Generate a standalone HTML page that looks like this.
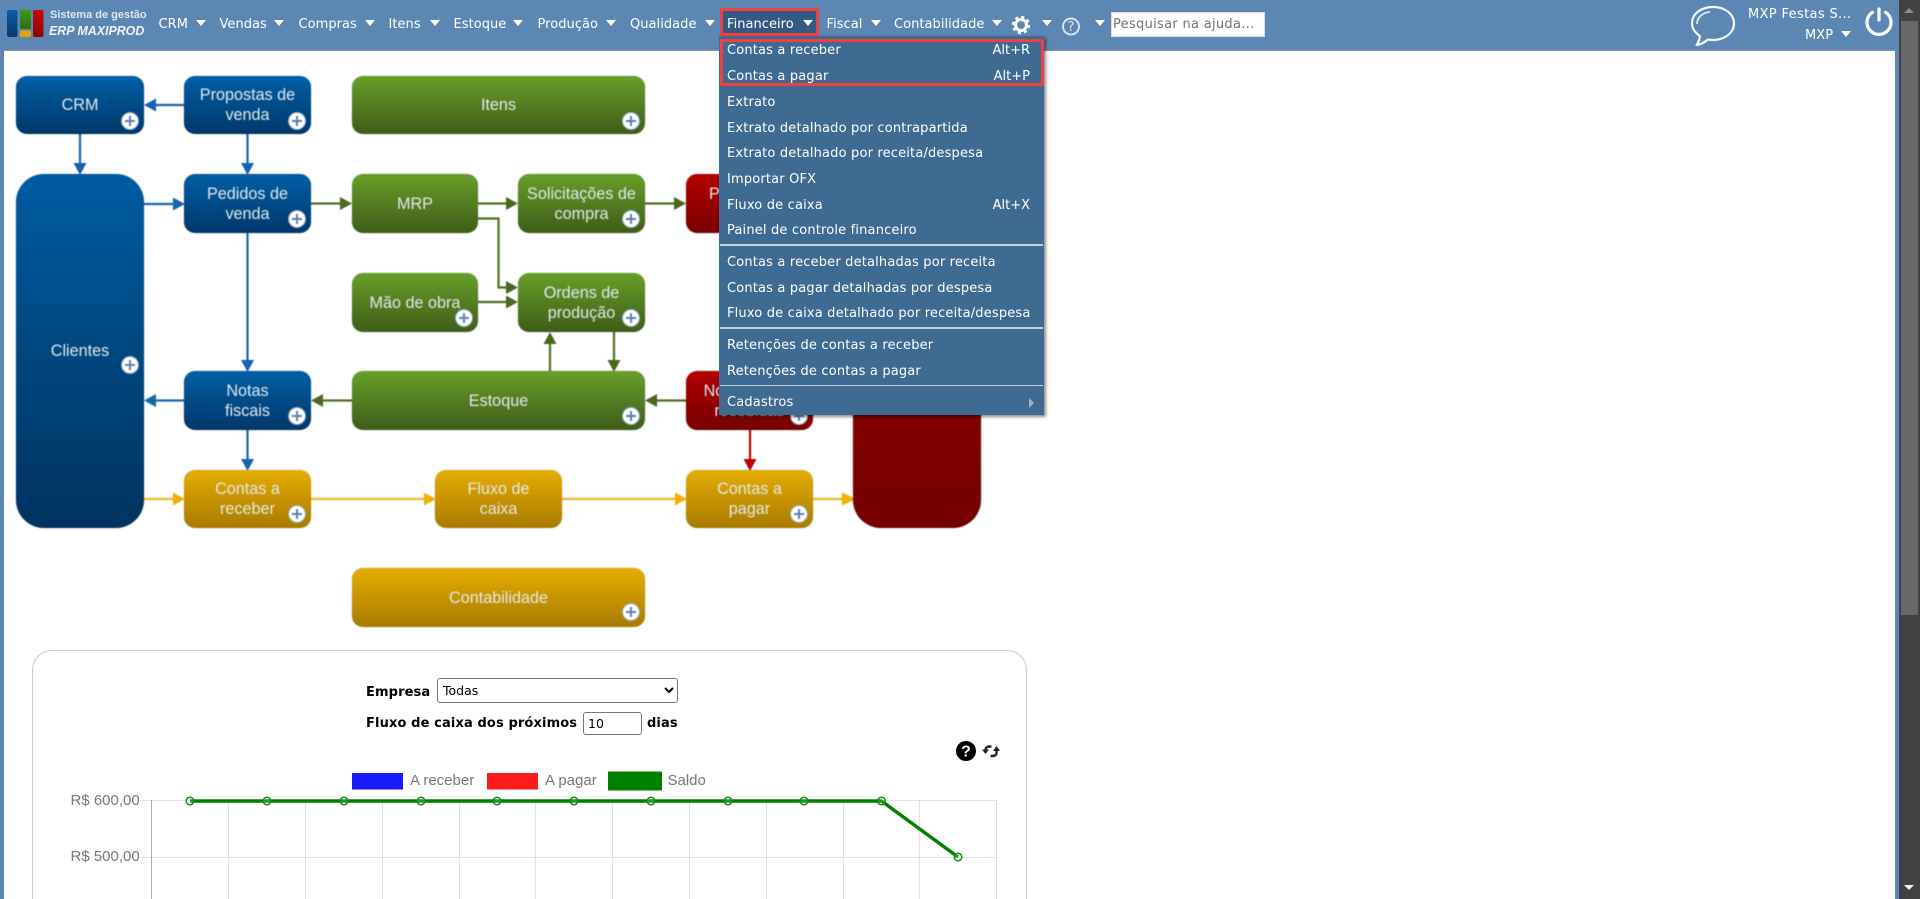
<!DOCTYPE html>
<html lang="pt-BR">
<head>
<meta charset="utf-8">
<title>ERP MAXIPROD</title>
<style>
html,body{margin:0;padding:0;width:1920px;height:899px;overflow:hidden;background:#5c87b2;}
body{position:relative;font-family:"DejaVu Sans","Liberation Sans",sans-serif;font-size:13px;color:#fff;}
.abs,.n,.c,.mi,.k,.sep{position:absolute;}
#main{position:absolute;left:4px;top:50px;width:1891px;height:849px;background:#fff;border-top:1px solid #8a9aa8;box-sizing:border-box;}
#sb{position:absolute;left:1899px;top:0;width:21px;height:899px;background:#424242;}
#thumb{position:absolute;left:2px;top:21px;width:17px;height:594px;background:#686868;}
.n{top:15px;line-height:20px;white-space:nowrap;color:#fff;letter-spacing:.04px;}
.c{width:0;height:0;border-left:5.5px solid transparent;border-right:5.5px solid transparent;border-top:6px solid #fff;top:19.5px;}
#active{position:absolute;left:720px;top:8px;width:99px;height:28px;background:#325a82;box-sizing:border-box;border:3px solid #f0403f;}
#menu{position:absolute;left:719px;top:36px;width:325px;height:379px;background:#3f6a92;box-shadow:2px 2px 3px rgba(0,0,0,.45);}
.mi{left:8px;line-height:20px;white-space:nowrap;color:#fff;letter-spacing:.17px;}
.k{right:14px;line-height:20px;color:#fff;}
.sep{left:1px;width:323px;background:#c6d0da;}
#rb{position:absolute;left:720px;top:39px;width:324px;height:47px;box-sizing:border-box;border:3px solid #f0403f;}
#diagram{position:absolute;left:0;top:0;width:1100px;height:640px;filter:blur(.45px);}
.b{position:absolute;display:flex;align-items:center;justify-content:center;text-align:center;font-family:"Liberation Sans",Arial,sans-serif;font-size:16.2px;line-height:20px;color:#e2e8ed;box-sizing:border-box;border-radius:11px;box-shadow:0 0 1px rgba(90,90,90,.5);}
.bl{background:linear-gradient(#005fa6,#00386a);}
.gr{background:linear-gradient(#689f29,#3e5c18);}
.rd{background:linear-gradient(#b40000,#760000);}
.go{background:linear-gradient(#e6ad00,#a87b00);}
.p{position:absolute;width:16px;height:16px;border-radius:50%;background:#fff;border:1.5px solid #8fa6c4;}
.p:before{content:"";position:absolute;left:3px;top:7px;width:10px;height:2px;background:#5a80b4;}
.p:after{content:"";position:absolute;left:7px;top:3px;width:2px;height:10px;background:#5a80b4;}
#panel{position:absolute;left:32px;top:650px;width:995px;height:249px;box-sizing:border-box;border:1px solid #ccc;border-bottom:none;border-radius:20px 20px 0 0;background:#fff;}
.f{position:absolute;color:#000;white-space:nowrap;line-height:20px;letter-spacing:.12px;}
.lg{position:absolute;font-family:"Liberation Sans",Arial,sans-serif;font-size:15px;color:#777;line-height:18px;white-space:nowrap;}
</style>
</head>
<body>
<div id="main"></div>

<!-- Diagram -->
<div id="diagram">
<svg class="abs" style="left:0;top:0" width="1100" height="640" viewBox="0 0 1100 640">
<g fill="none" stroke-width="2.2">
<g stroke="#1464ae">
<path d="M184 105H155M80 134V164M247.5 134V164M144 204H174M247.5 233V361M184 400.5H155M247.5 430V460"/>
</g>
<g stroke="#4f6e23">
<path d="M311 203.5H342M478 203.5H508M645 203.5H676M478 218.5H498.5V287.5H508M478 302H508M550 371V343M614 332V361M352 400.5H322M686 400.5H656"/>
</g>
<path stroke="#c00000" d="M750 430V460"/>
<path stroke="#efb32a" d="M144 499H174M311 499H425M562 499H676M813 499H845"/>
</g>
<g fill="#1464ae">
<path d="M144 105L156 98.5V111.5Z"/><path d="M80 175L73.5 163H86.5Z"/><path d="M247.5 175L241 163H254Z"/><path d="M185 204L173 197.5V210.5Z"/><path d="M247.5 372L241 360H254Z"/><path d="M144 400.5L156 394V407Z"/><path d="M247.5 471L241 459H254Z"/>
</g>
<g fill="#4a681f">
<path d="M352 203.5L340 197V210Z"/><path d="M518 203.5L506 197V210Z"/><path d="M686 203.5L674 197V210Z"/><path d="M518 287.5L506 281V294Z"/><path d="M518 302L506 295.5V308.5Z"/><path d="M550 332L543.5 344H556.5Z"/><path d="M614 372L607.5 360H620.5Z"/><path d="M311 400.5L323 394V407Z"/><path d="M645 400.5L657 394V407Z"/>
</g>
<path fill="#c00000" d="M750 471L743.5 459H756.5Z"/>
<g fill="#efb000">
<path d="M185 499L173 492.5V505.5Z"/><path d="M436 499L424 492.5V505.5Z"/><path d="M687 499L675 492.5V505.5Z"/><path d="M856 499L842 492.5V505.5Z"/>
</g>
</svg>

<div class="b bl" style="left:16px;top:76px;width:128px;height:58px">CRM</div><i class="p" style="left:121px;top:112px"></i>
<div class="b bl" style="left:184px;top:76px;width:127px;height:58px">Propostas de<br>venda</div><i class="p" style="left:288px;top:112px"></i>
<div class="b gr" style="left:352px;top:76px;width:293px;height:58px">Itens</div><i class="p" style="left:622px;top:112px"></i>
<div class="b bl" style="left:16px;top:174px;width:128px;height:354px;border-radius:28px;background:linear-gradient(#005ca1,#00335f)"><span style="position:relative;top:0;left:0">Clientes</span></div><i class="p" style="left:121px;top:356px"></i>
<div class="b bl" style="left:184px;top:174px;width:127px;height:59px">Pedidos de<br>venda</div><i class="p" style="left:288px;top:210px"></i>
<div class="b gr" style="left:352px;top:174px;width:126px;height:59px">MRP</div>
<div class="b gr" style="left:518px;top:174px;width:127px;height:59px">Solicitações de<br>compra</div><i class="p" style="left:622px;top:210px"></i>
<div class="b rd" style="left:686px;top:174px;width:127px;height:59px">Pedidos de<br>compra</div>
<div class="b gr" style="left:352px;top:273px;width:126px;height:59px">Mão de obra</div><i class="p" style="left:455px;top:309px"></i>
<div class="b gr" style="left:518px;top:273px;width:127px;height:59px">Ordens de<br>produção</div><i class="p" style="left:622px;top:309px"></i>
<div class="b gr" style="left:352px;top:371px;width:293px;height:59px">Estoque</div><i class="p" style="left:622px;top:407px"></i>
<div class="b bl" style="left:184px;top:371px;width:127px;height:59px">Notas<br>fiscais</div><i class="p" style="left:288px;top:407px"></i>
<div class="b rd" style="left:686px;top:371px;width:127px;height:59px">Notas fiscais<br>recebidas</div><i class="p" style="left:790px;top:407px"></i>
<div class="b rd" style="left:853px;top:174px;width:128px;height:354px;border-radius:28px;background:linear-gradient(#a00000,#760000)">Fornecedores</div>
<div class="b go" style="left:184px;top:470px;width:127px;height:58px">Contas a<br>receber</div><i class="p" style="left:288px;top:505px"></i>
<div class="b go" style="left:435px;top:470px;width:127px;height:58px">Fluxo de<br>caixa</div>
<div class="b go" style="left:686px;top:470px;width:127px;height:58px">Contas a<br>pagar</div><i class="p" style="left:790px;top:505px"></i>
<div class="b go" style="left:352px;top:568px;width:293px;height:59px">Contabilidade</div><i class="p" style="left:622px;top:603px"></i>
</div>

<!-- Panel -->
<div id="panel"></div>
<span class="f" style="left:366px;top:683px;font-weight:bold">Empresa</span>
<select style="position:absolute;left:437px;top:678px;width:241px;height:25px;font:12.5px 'DejaVu Sans',sans-serif;color:#000;background:#fff;border:1px solid #767676;border-radius:3px;padding-left:1px"><option>Todas</option></select>
<span class="f" style="left:366px;top:714px;font-weight:bold">Fluxo de caixa dos próximos</span>
<input value="10" style="position:absolute;left:583px;top:712px;width:59px;height:23px;box-sizing:border-box;font:12.5px 'DejaVu Sans',sans-serif;color:#000;border:1px solid #767676;border-radius:3px;padding:0 4px;background:#fff">
<span class="f" style="left:647px;top:714px;font-weight:bold">dias</span>
<svg class="abs" style="left:955px;top:740px" width="50" height="24" viewBox="0 0 50 24">
<circle cx="11" cy="11" r="10" fill="#000"/>
<text x="11" y="16.5" text-anchor="middle" fill="#fff" font-family="Liberation Sans,sans-serif" font-weight="bold" font-size="16">?</text>
<g fill="none" stroke="#222" stroke-width="2.4">
<path d="M30.500 10C30.500 7.500 32.500 6.500 34.500 6.500H36.500M41.500 10V13C41.500 15 39.500 16 37.500 16H35.500"/>
</g>
<path d="M27 9.500H34L30.500 14Z" fill="#222"/>
<path d="M38 11H45L41.500 6Z" fill="#222"/>
</svg>

<span class="lg" style="left:410px;top:772px">A receber</span>
<span class="lg" style="left:545px;top:772px">A pagar</span>
<span class="lg" style="left:667.5px;top:772px">Saldo</span>
<span class="lg" style="left:70.5px;top:792px">R$ 600,00</span>
<span class="lg" style="left:70.5px;top:848px">R$ 500,00</span>
<svg class="abs" style="left:0;top:760px" width="1040" height="139" viewBox="0 760 1040 139">
<rect x="352" y="773" width="51" height="16.5" fill="#1a1aff"/>
<rect x="487" y="773" width="51" height="16.5" fill="#ff1a1a"/>
<rect x="608" y="771.5" width="54" height="19" fill="#008000"/>
<g stroke="#e2e2e2" stroke-width="1" fill="none">
<path d="M140 800.5H997M140 857.5H997"/>
<path d="M228.5 800V899M305.5 800V899M382.5 800V899M459.5 800V899M535.5 800V899M612.5 800V899M689.5 800V899M766.5 800V899M843.5 800V899M919.5 800V899M996.5 800V899"/>
</g>
<path d="M151.5 800V899" stroke="#aaa" stroke-width="1"/>
<polyline points="190,801 881.5,801 958,857" fill="none" stroke="#008000" stroke-width="3.5" stroke-linejoin="round"/>
<g fill="#fff" fill-opacity=".15" stroke="#119011" stroke-width="1.5">
<circle cx="190" cy="801" r="3.8"/><circle cx="267" cy="801" r="3.8"/><circle cx="344" cy="801" r="3.8"/><circle cx="421" cy="801" r="3.8"/><circle cx="497" cy="801" r="3.8"/><circle cx="574" cy="801" r="3.8"/><circle cx="651" cy="801" r="3.8"/><circle cx="728" cy="801" r="3.8"/><circle cx="804" cy="801" r="3.8"/><circle cx="881.5" cy="801" r="3.8"/><circle cx="958" cy="857" r="3.8"/>
</g>
</svg>

<!-- Header -->
<div id="active"></div>
<svg class="abs" style="left:7px;top:10px" width="37" height="28" viewBox="0 0 37 28">
<defs>
<linearGradient id="lgb" x1="0" y1="0" x2="0" y2="1"><stop offset="0" stop-color="#0a5ca8"/><stop offset="1" stop-color="#073a6e"/></linearGradient>
<linearGradient id="lgg" x1="0" y1="0" x2="0" y2="1"><stop offset="0" stop-color="#3f9a14"/><stop offset="1" stop-color="#2f6d10"/></linearGradient>
<linearGradient id="lgr" x1="0" y1="0" x2="0" y2="1"><stop offset="0" stop-color="#c80808"/><stop offset="1" stop-color="#8a0505"/></linearGradient>
</defs>
<rect x="0" y="0" width="10.5" height="27" rx="2" fill="url(#lgb)"/>
<rect x="13" y="0" width="11" height="19" rx="2" fill="url(#lgg)"/>
<rect x="13" y="20.5" width="11" height="6.5" rx="1.5" fill="#e2a60a"/>
<rect x="26" y="0" width="10.5" height="27" rx="2" fill="url(#lgr)"/>
</svg>
<span class="abs" style="left:50px;top:9px;font-family:'Liberation Sans',sans-serif;font-size:11px;line-height:13px;font-weight:bold;color:#dfe6ee;white-space:nowrap">Sistema de gestão</span>
<span class="abs" style="left:49px;top:22px;font-size:13.2px;line-height:17px;font-weight:bold;font-style:italic;color:#eef2f6;white-space:nowrap;font-family:'Liberation Sans',sans-serif;transform:scaleX(.94);transform-origin:left center">ERP MAXIPROD</span>

<span class="n" style="left:158.5px">CRM</span><i class="c" style="left:196px"></i>
<span class="n" style="left:219.5px">Vendas</span><i class="c" style="left:274px"></i>
<span class="n" style="left:298.5px">Compras</span><i class="c" style="left:365px"></i>
<span class="n" style="left:388.5px">Itens</span><i class="c" style="left:430px"></i>
<span class="n" style="left:453.5px">Estoque</span><i class="c" style="left:513px"></i>
<span class="n" style="left:537.5px">Produção</span><i class="c" style="left:606px"></i>
<span class="n" style="left:630px">Qualidade</span><i class="c" style="left:705px"></i>
<span class="n" style="left:727px">Financeiro</span><i class="c" style="left:803px"></i>
<span class="n" style="left:826.5px">Fiscal</span><i class="c" style="left:871px"></i>
<span class="n" style="left:894px">Contabilidade</span><i class="c" style="left:992px"></i>
<svg class="abs" style="left:1010px;top:14px" width="22" height="22" viewBox="0 0 22 22">
<circle cx="11" cy="11" r="5.5" fill="none" stroke="#fff" stroke-width="3"/>
<circle cx="11" cy="11" r="8" fill="none" stroke="#fff" stroke-width="2.4" stroke-dasharray="3.14 3.14"/>
</svg>
<i class="c" style="left:1042px"></i>
<svg class="abs" style="left:1061px;top:17px" width="20" height="19" viewBox="0 0 20 19">
<circle cx="10" cy="9.5" r="8" fill="none" stroke="#dbe4ec" stroke-width="1.9"/>
<text x="10" y="14" text-anchor="middle" fill="#dbe4ec" font-family="DejaVu Sans,sans-serif" font-size="13">?</text>
</svg>
<i class="c" style="left:1094.5px"></i>
<input value="" placeholder="Pesquisar na ajuda..." style="position:absolute;left:1111px;top:12px;width:154px;height:25px;box-sizing:border-box;border:1px solid #ddd;background:#fff;padding:0 0 0 1px;font:13px 'DejaVu Sans',sans-serif;letter-spacing:.3px;color:#777">
<svg class="abs" style="left:1688px;top:4px" width="50" height="44" viewBox="0 0 50 44">
<path d="M25 3C13 3 4 10 4 19C4 25 7.5 29 12 32C11.5 36 10 39 8.5 41C13 40.5 17 38 20 35.5C22 35.8 23.5 36 25 36C37 36 46 28.5 46 19.5C46 10 37 3 25 3Z" fill="none" stroke="#f4f7fa" stroke-width="2.2" stroke-linejoin="round"/>
<path d="M9 20C9 13 15 8.5 22 8" fill="none" stroke="#dfe7ef" stroke-width="1.8"/>
</svg>
<span class="n" style="left:1748px;top:5px;letter-spacing:.35px">MXP Festas S...</span>
<span class="n" style="left:1805px;top:26px">MXP</span><i class="c" style="left:1841px;top:31px"></i>
<svg class="abs" style="left:1863px;top:6px" width="32" height="32" viewBox="0 0 32 32">
<path d="M9.5 6.3A12 12 0 1 0 22.500 6.300" fill="none" stroke="#f6f9fb" stroke-width="3.300" stroke-linecap="round"/>
<path d="M16 3V14" fill="none" stroke="#f6f9fb" stroke-width="3.300" stroke-linecap="round"/>
</svg>

<!-- Menu -->
<div id="menu">
<span class="mi" style="top:5px">Contas a receber</span><span class="k" style="top:5px">Alt+R</span>
<span class="mi" style="top:31px">Contas a pagar</span><span class="k" style="top:31px">Alt+P</span>
<span class="mi" style="top:57px">Extrato</span>
<span class="mi" style="top:83px">Extrato detalhado por contrapartida</span>
<span class="mi" style="top:108px">Extrato detalhado por receita/despesa</span>
<span class="mi" style="top:134px">Importar OFX</span>
<span class="mi" style="top:160px">Fluxo de caixa</span><span class="k" style="top:160px">Alt+X</span>
<span class="mi" style="top:185px">Painel de controle financeiro</span>
<div class="sep" style="top:208px;height:2px"></div>
<span class="mi" style="top:217px">Contas a receber detalhadas por receita</span>
<span class="mi" style="top:243px">Contas a pagar detalhadas por despesa</span>
<span class="mi" style="top:268px">Fluxo de caixa detalhado por receita/despesa</span>
<div class="sep" style="top:291px;height:2px"></div>
<span class="mi" style="top:300px">Retenções de contas a receber</span>
<span class="mi" style="top:326px">Retenções de contas a pagar</span>
<div class="sep" style="top:349px;height:1px"></div>
<span class="mi" style="top:357px">Cadastros</span>
<i class="abs" style="left:310px;top:362px;width:0;height:0;border-top:5px solid transparent;border-bottom:5px solid transparent;border-left:5px solid #9fb2c4"></i>
</div>
<div id="rb"></div>

<!-- Scrollbar -->
<div id="sb">
<i class="abs" style="left:5px;top:8px;width:0;height:0;border-left:5.5px solid transparent;border-right:5.5px solid transparent;border-bottom:5px solid #8a8a8a"></i>
<div id="thumb"></div>
<i class="abs" style="left:5px;top:885px;width:0;height:0;border-left:5.5px solid transparent;border-right:5.5px solid transparent;border-top:5px solid #f2f2f2"></i>
</div>
</body>
</html>
